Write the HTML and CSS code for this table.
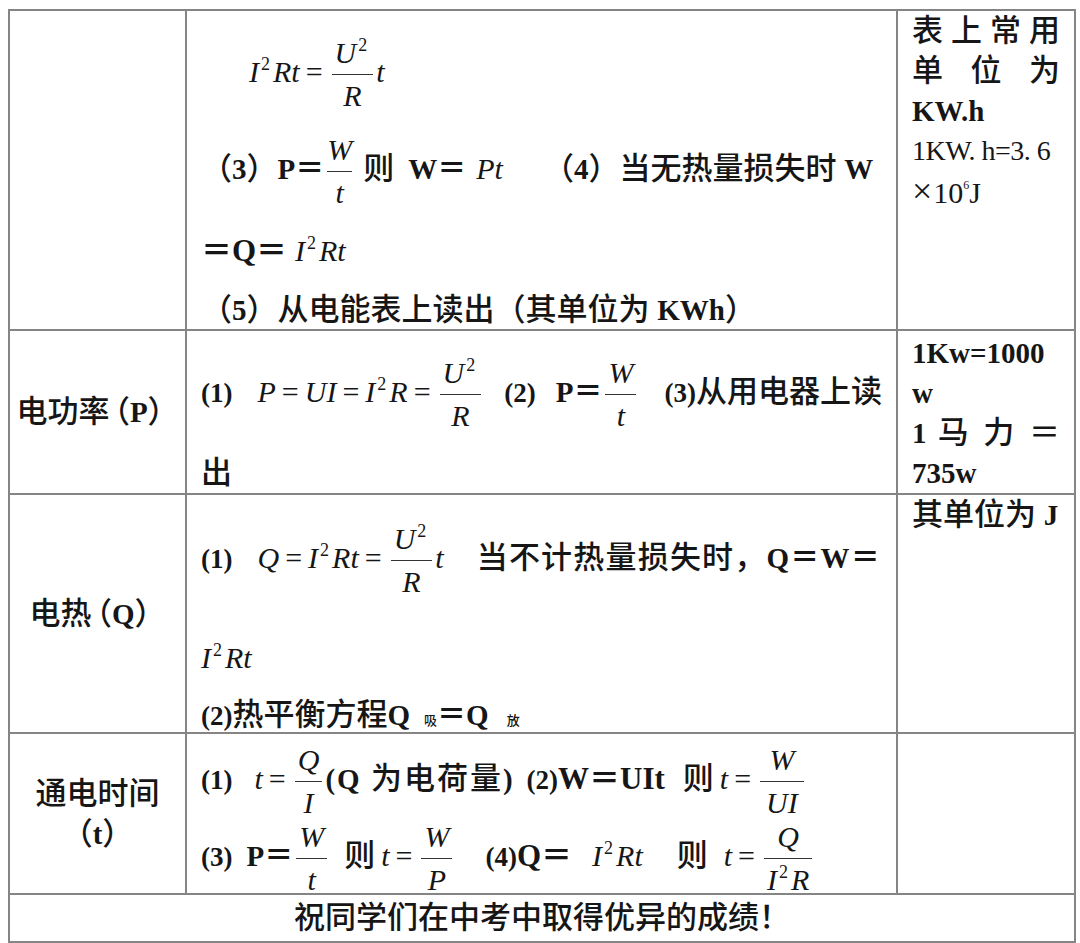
FILE: index.html
```html
<!DOCTYPE html>
<html lang="zh">
<head>
<meta charset="utf-8">
<title>电学公式表</title>
<link rel="stylesheet" href="styles.css">
</head>
<body>
<table class="sheet">
<colgroup><col class="c1"><col class="c2"><col class="c3"></colgroup>
<tbody>
<tr class="r1">
<td class="name"></td>
<td class="body">
<div class="ln a1 ind"><span class="m">I<sup>2</sup>Rt</span><span class="eq">=</span><span class="frac"><span class="n m">U<sup>2</sup></span><span class="d m">R</span></span><span class="m">t</span></div>
<div class="ln a2">（<span class="b">3</span>）<span class="b">P＝</span><span class="frac nb"><span class="n m">W</span><span class="d m">t</span></span><span class="ml8">则</span><span class="b ml14">W＝</span><span class="m ml10">Pt</span><span class="ml40">（</span><span class="b">4</span>）当无热量损失时 <span class="b">W</span></div>
<div class="ln a3"><span class="b big">＝Q＝</span> <span class="m">I<sup>2</sup>Rt</span></div>
<div class="ln a4">（<span class="b">5</span>）从电能表上读出（其单位为 <span class="b">KWh</span>）</div>
</td>
<td class="note">
<div class="jl">表上常用</div>
<div class="jl">单位为</div>
<div class="b">KW.h</div>
<div class="sim">1KW. h=3. 6</div>
<div class="sci"><span class="times">×</span>10<span class="exp">6</span>J</div>
</td>
</tr>
<tr class="r2">
<td class="name">电功率<span class="hw">（</span><span class="b">P</span>）</td>
<td class="body">
<div class="ln b1"><span class="lbl">(1)</span><span class="m ml25">P</span><span class="eq">=</span><span class="m">UI</span><span class="eq">=</span><span class="m">I<sup>2</sup>R</span><span class="eq">=</span><span class="frac"><span class="n m">U<sup>2</sup></span><span class="d m">R</span></span><span class="lbl ml20">(2)</span><span class="b ml20">P＝</span><span class="frac"><span class="n m">W</span><span class="d m">t</span></span><span class="lbl ml25">(3)</span>从用电器上读</div>
<div class="ln b2">出</div>
</td>
<td class="note n2">
<div class="b">1Kw=1000</div>
<div class="b">w</div>
<div class="jl"><span class="b">1</span> 马 力 ＝</div>
<div class="b">735w</div>
</td>
</tr>
<tr class="r3">
<td class="name">电热<span class="hw">（</span><span class="b">Q</span>）</td>
<td class="body">
<div class="ln c1"><span class="lbl">(1)</span><span class="m ml25">Q</span><span class="eq">=</span><span class="m">I<sup>2</sup>Rt</span><span class="eq">=</span><span class="frac"><span class="n m">U<sup>2</sup></span><span class="d m">R</span></span><span class="m">t</span><span class="wide ml33">当不计热量损失时，<span class="b">Q＝W＝</span></span></div>
<div class="ln c2"><span class="m">I<sup>2</sup>Rt</span></div>
<div class="ln c3"><span class="lbl">(2)</span>热平衡方程<span class="b">Q</span><span class="sub s-in">吸</span><span class="b">＝Q</span><span class="sub s-out">放</span></div>
</td>
<td class="note">其单位为 <span class="b">J</span></td>
</tr>
<tr class="r4">
<td class="name">通电时间<br>（<span class="b">t</span>）</td>
<td class="body">
<div class="ln d1"><span class="lbl">(1)</span><span class="m ml22">t</span><span class="eq">=</span><span class="frac"><span class="n m">Q</span><span class="d m">I</span></span><span class="wider"><span class="b">(Q </span>为电荷量<span class="b">)</span></span><span class="lbl ml12">(2)</span><span class="b big">W＝UIt</span><span class="ml18">则</span><span class="m ml6">t</span><span class="eq">=</span><span class="frac wf"><span class="n m">W</span><span class="d m">UI</span></span></div>
<div class="ln d2"><span class="lbl">(3)</span><span class="b ml14">P＝</span><span class="frac"><span class="n m">W</span><span class="d m">t</span></span><span class="ml14">则</span><span class="m ml6">t</span><span class="eq">=</span><span class="frac"><span class="n m">W</span><span class="d m">P</span></span><span class="lbl ml30">(4)</span><span class="b big">Q＝</span><span class="m ml20">I<sup>2</sup>Rt</span><span class="ml34">则</span><span class="m ml16">t</span><span class="eq">=</span><span class="frac"><span class="n m">Q</span><span class="d m">I<sup>2</sup>R</span></span></div>
</td>
<td class="note"></td>
</tr>
<tr class="r5">
<td class="foot" colspan="3">祝同学们在中考中取得优异的成绩！</td>
</tr>
</tbody>
</table>
</body>
</html>
```

FILE: styles.css
```css
html, body {
  margin: 0;
  background: #ffffff;
}
body {
  padding: 9px 0 0 8px;
  color: #161616;
  font-family: "Liberation Serif", "Noto Sans CJK SC", serif;
}
.sheet {
  border-collapse: collapse;
  table-layout: fixed;
  width: 1066px;
}
.c1 { width: 177px; }
.c2 { width: 711px; }
.c3 { width: 178px; }
.r1 { height: 320px; }
.r2 { height: 160px; }
.r3 { height: 239px; }
.r4 { height: 161px; }
.r5 { height: 48px; }
.sheet td {
  border: 2px solid #858585;
  padding: 0;
  vertical-align: top;
  font-size: 31px;
  font-weight: 500;
}
.sheet td.name {
  vertical-align: middle;
  text-align: center;
  line-height: 40px;
}
.sheet td.body {
  padding: 0 10px 0 14px;
}
.sheet td.note {
  padding: 0 14px;
  line-height: 40px;
}
.sheet td.n2 {
  padding-top: 2px;
}
.sheet td.foot {
  vertical-align: middle;
  text-align: center;
  line-height: 40px;
}
.hw {
  font-feature-settings: "halt";
  margin-left: 5px;
}
.b {
  font-weight: 700;
  font-size: 29px;
}
.big {
  font-size: 31px;
}
.lbl {
  font-weight: 700;
  font-size: 27px;
}
.m {
  font-style: italic;
  font-weight: 400;
  font-size: 30px;
}
.eq {
  font-weight: 400;
  font-size: 30px;
  margin: 0 6px;
}
sup {
  font-size: 18px;
  line-height: 0;
  vertical-align: 12px;
  margin: 0 3px 0 2px;
  font-style: normal;
}
.ln {
  height: 30px;
  line-height: 30px;
  white-space: nowrap;
}
.ind { padding-left: 48px; }
.a1 { margin-top: 46px; }
.a2 { margin-top: 67px; }
.a3 { margin-top: 52px; }
.a4 { margin-top: 29px; }
.b1 { margin-top: 46px; }
.b2 { margin-top: 51px; }
.c1 { margin-top: 48px; }
.c2 { margin-top: 70px; }
.c3 { margin-top: 27px; }
.d1 { margin-top: 30px; }
.d2 { margin-top: 47px; }
.frac {
  display: inline-flex;
  flex-direction: column;
  vertical-align: middle;
  margin: -26px 3px;
  line-height: 32px;
  text-align: center;
}
.frac .n {
  border-bottom: 1px solid #333;
  padding: 0 3px 5px;
}
.frac .d {
  padding: 5px 3px 0;
}
.frac.nb .n, .frac.nb .d {
  padding-left: 0;
  padding-right: 0;
}
.frac.wf .n, .frac.wf .d {
  padding-left: 6px;
  padding-right: 6px;
}
.ml6 { margin-left: 6px; }
.ml8 { margin-left: 8px; }
.ml10 { margin-left: 10px; }
.ml12 { margin-left: 12px; }
.ml14 { margin-left: 14px; }
.ml16 { margin-left: 16px; }
.ml18 { margin-left: 18px; }
.ml20 { margin-left: 20px; }
.ml22 { margin-left: 22px; }
.ml25 { margin-left: 25px; }
.ml30 { margin-left: 30px; }
.ml33 { margin-left: 33px; }
.ml34 { margin-left: 34px; }
.ml40 { margin-left: 40px; }
.wide {
  letter-spacing: 1.2px;
}
.wider {
  letter-spacing: 2px;
}
.jl {
  text-align: justify;
  text-align-last: justify;
}
.sim {
  font-size: 28px;
  letter-spacing: -0.5px;
  font-weight: 400;
}
.sci {
  font-weight: 400;
  font-size: 30px;
}
.times {
  font-size: 36px;
  margin-right: 1px;
}
.exp {
  font-size: 12px;
  line-height: 0;
  vertical-align: 14px;
}
.sub {
  font-size: 13px;
}
.s-in {
  margin: 0 0 0 14px;
}
.s-out {
  margin: 0 0 0 18px;
}
```
